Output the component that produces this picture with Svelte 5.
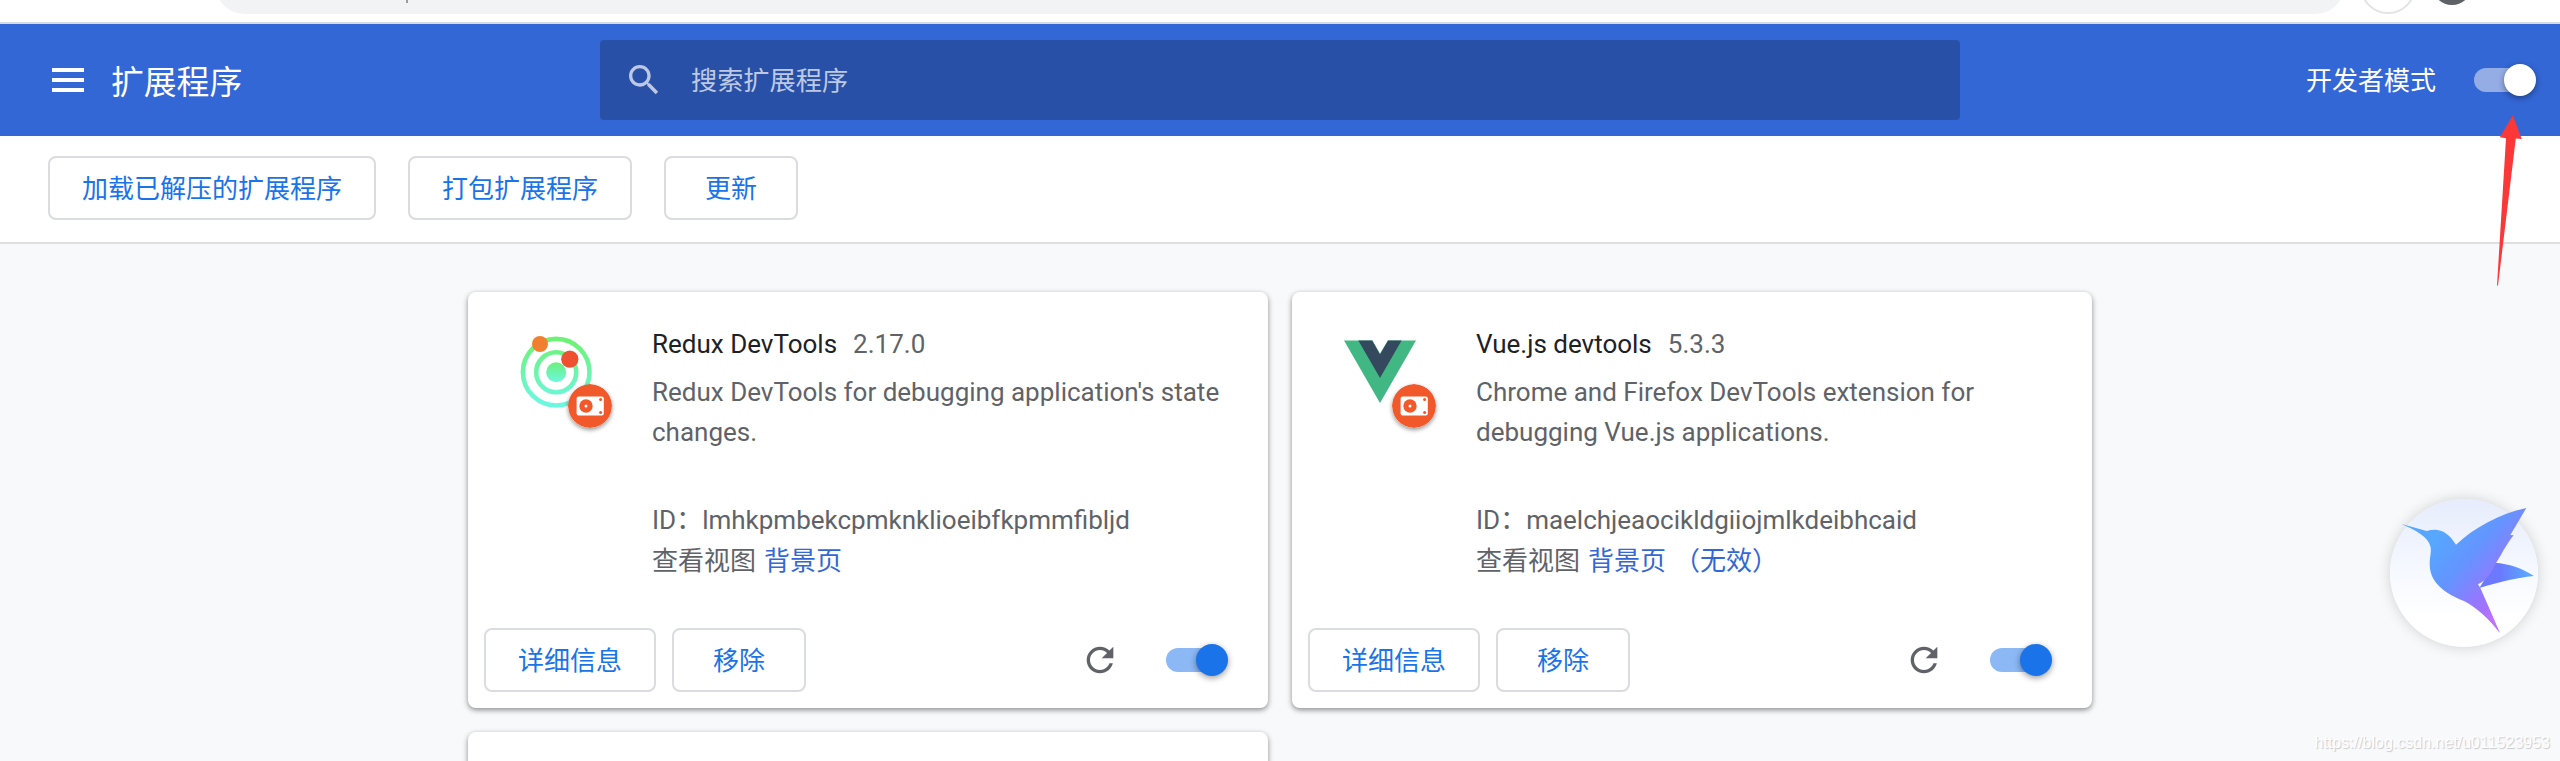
<script>
  const tools = ['加载已解压的扩展程序', '打包扩展程序', '更新'];
  const extensions = [
    {
      icon: 'redux',
      name: 'Redux DevTools',
      version: '2.17.0',
      description: "Redux DevTools for debugging application's state changes.",
      id: 'lmhkpmbekcpmknklioeibfkpmmfibljd',
      views: ['背景页']
    },
    {
      icon: 'vue',
      name: 'Vue.js devtools',
      version: '5.3.3',
      description: 'Chrome and Firefox DevTools extension for debugging Vue.js applications.',
      id: 'maelchjeaocikldgiiojmlkdeibhcaid',
      views: ['背景页', '（无效）']
    }
  ];
</script>

<div class="page">
  <div class="browser">
    <div class="omnibox"><i></i></div>
    <div class="ring"></div>
    <div class="avatar"></div>
  </div>

  <header>
    <div class="brand">
      <div class="menu"><i></i><i></i><i></i></div>
      <h1>扩展程序</h1>
    </div>
    <div class="search">
      <svg width="40" height="40" viewBox="0 0 24 24"><path fill="currentColor" d="M15.5 14h-.79l-.28-.27C15.41 12.59 16 11.11 16 9.5 16 5.91 13.09 3 9.5 3S3 5.91 3 9.5 5.91 16 9.5 16c1.61 0 3.09-.59 4.23-1.57l.27.28v.79l5 4.99L20.49 19l-4.99-5zm-6 0C7.01 14 5 11.99 5 9.5S7.01 5 9.5 5 14 7.01 14 9.5 11.99 14 9.5 14z"/></svg>
      <span>搜索扩展程序</span>
    </div>
    <div class="dev">
      <span>开发者模式</span>
      <div class="toggle light"><b></b></div>
    </div>
  </header>

  <nav>
    {#each tools as tool}
      <button>{tool}</button>
    {/each}
  </nav>

  <main>
    {#each extensions as ext}
      <article>
        <div class="body">
          <div class="icon">
            {#if ext.icon === 'redux'}
              <svg width="72" height="72" viewBox="0 0 72 72">
                <defs>
                  <linearGradient id="orbit" gradientUnits="userSpaceOnUse" x1="0" y1="0" x2="0" y2="72">
                    <stop offset="0.1" stop-color="#6cf377"/>
                    <stop offset="0.9" stop-color="#6cf7df"/>
                  </linearGradient>
                  <linearGradient id="core" x1="0" y1="0" x2="0" y2="1">
                    <stop offset="0" stop-color="#6cf07b"/>
                    <stop offset="1" stop-color="#6cf7df"/>
                  </linearGradient>
                </defs>
                <circle cx="36.2" cy="36.2" r="33.3" fill="none" stroke="url(#orbit)" stroke-width="4.6"/>
                <circle cx="36.2" cy="36.2" r="20" fill="none" stroke="url(#orbit)" stroke-width="4.6"/>
                <circle cx="36.2" cy="36.2" r="10" fill="url(#core)"/>
                <circle cx="20" cy="8" r="8" fill="#f08030"/>
                <circle cx="49.8" cy="23.2" r="8.6" fill="#ee5030"/>
              </svg>
            {:else}
              <svg width="72" height="72" viewBox="0 0 72 72">
                <path fill="#41b883" d="M0 4.5h28.5L36 17.5l8-13h28L36 67z"/>
                <path fill="#35495e" d="M14.3 4.5h13.8L36 18.5l8-14h13.6L36 42z"/>
              </svg>
            {/if}
            <svg class="badge" width="44" height="44" viewBox="0 0 44 44">
              <circle cx="22" cy="22" r="22" fill="#f2592a"/>
              <rect x="8.6" y="12.6" width="27.2" height="19" rx="2" fill="#fff"/>
              <circle cx="18" cy="22" r="6.7" fill="#f2592a"/>
              <circle cx="18" cy="22" r="1.5" fill="#fff"/>
              <circle cx="32.6" cy="15.6" r="1.5" fill="#f2592a"/>
              <circle cx="32.6" cy="28.6" r="1.5" fill="#f2592a"/>
            </svg>
          </div>
          <div class="info">
            <div class="name"><strong>{ext.name}</strong><span>{ext.version}</span></div>
            <p class="description">{ext.description}</p>
            <div class="id">ID：{ext.id}</div>
            <div class="views"><span>查看视图</span>{#each ext.views as view}<a>{view}</a>{/each}</div>
          </div>
        </div>
        <footer>
          <button>详细信息</button>
          <button>移除</button>
          <svg class="reload" width="40" height="40" viewBox="0 0 24 24"><path fill="#5f6368" d="M17.65 6.35C16.2 4.9 14.21 4 12 4c-4.42 0-7.99 3.58-7.99 8s3.57 8 7.99 8c3.73 0 6.84-2.55 7.73-6h-2.08c-.82 2.33-3.04 4-5.65 4-3.31 0-6-2.69-6-6s2.69-6 6-6c1.66 0 3.14.69 4.22 1.78L13 11h7V4l-2.35 2.35z"/></svg>
          <div class="toggle"><b></b></div>
        </footer>
      </article>
    {/each}
    <article></article>
  </main>

  <svg class="arrow" width="32" height="176" viewBox="2494 112 32 176">
    <path fill="#fb3838" d="M2512.8 115.5L2521.8 139L2515.8 138.6L2498 285.5H2497L2506 138.2L2499.8 137.2Z"/>
  </svg>

  <div class="bird">
    <svg width="148" height="148" viewBox="270 117 444 444">
      <defs>
        <linearGradient id="wing" gradientUnits="userSpaceOnUse" x1="410" y1="240" x2="610" y2="420">
          <stop offset="0" stop-color="#57a6ff"/>
          <stop offset="0.4" stop-color="#6494ff"/>
          <stop offset="0.75" stop-color="#8f7bff"/>
          <stop offset="1" stop-color="#a472ff"/>
        </linearGradient>
        <radialGradient id="tailglow" gradientUnits="userSpaceOnUse" cx="580" cy="490" r="115">
          <stop offset="0" stop-color="#cb70ff"/>
          <stop offset="0.45" stop-color="#a472ff" stop-opacity="0.9"/>
          <stop offset="1" stop-color="#8f7bff" stop-opacity="0"/>
        </radialGradient>
        <linearGradient id="feather" gradientUnits="userSpaceOnUse" x1="540" y1="0" x2="702" y2="0">
          <stop offset="0.35" stop-color="#6b78ff"/>
          <stop offset="1" stop-color="#55b2ff"/>
        </linearGradient>
      </defs>
      <path fill="url(#feather)" d="M585 308C627 311 665 324 702 348C645 354 589 368 538 384Z"/>
      <path fill="url(#wing)" d="M305 192L380 213C416 202 443 214 468 254C523 203 597 162 679 144L631 225L641 226C617 255 606 282 588 309C573 339 562 360 534 373L541 384L599 518C567 476 533 444 492 423C429 398 388 365 389 309C390 288 394 279 392 262C384 228 347 212 305 192Z"/>
      <path fill="url(#tailglow)" d="M534 373L541 384L599 518C567 476 533 444 492 423C470 414 450 404 435 393Z"/>
    </svg>
  </div>

  <div class="watermark">https://blog.csdn.net/u011523953</div>
</div>

<style>
  :global(body) { margin: 0; }
  .page {
    position: relative;
    width: 2560px;
    height: 761px;
    overflow: hidden;
    box-sizing: border-box;
    background: #f8f9fb;
    font-family: Roboto, "Noto Sans CJK SC", sans-serif;
    font-size: 26px;
    line-height: 40px;
    color: #5f6368;
    display: flex;
    flex-direction: column;
  }
  .browser {
    flex: none;
    box-sizing: border-box;
    height: 24px;
    padding: 0 88px 8px 216px;
    border-bottom: 2px solid #d9dbe1;
    background: #fff;
    display: flex;
    overflow: hidden;
  }
  .omnibox {
    width: 2128px;
    height: 56px;
    margin-top: -42px;
    border-radius: 28px;
    background: #f1f3f4;
    display: flex;
    align-items: center;
  }
  .omnibox i { width: 2px; height: 3px; margin: 31px 0 0 190px; background: #999ca0; }
  .ring {
    box-sizing: border-box;
    width: 56px;
    height: 56px;
    margin: -42px 0 0 16px;
    border: 2px solid #e2e3e5;
    border-radius: 50%;
  }
  .avatar {
    width: 40px;
    height: 40px;
    margin: -35px 0 0 16px;
    border-radius: 50%;
    background: #5f6368;
  }
  header {
    flex: none;
    height: 112px;
    box-sizing: border-box;
    padding: 0 24px 0 52px;
    background: #3367d6;
    color: #fff;
    display: grid;
    grid-template-columns: 548px 1360px 1fr;
    align-items: center;
  }
  .brand { display: flex; align-items: center; gap: 27px; }
  .menu { display: grid; gap: 6px; width: 32px; }
  .menu i { height: 4px; background: #fff; }
  h1 { margin: 0; padding-top: 5px; font-size: 32.8px; font-weight: 400; }
  .search {
    box-sizing: border-box;
    height: 80px;
    padding-left: 24px;
    border-radius: 4px;
    background: #2850a7;
    color: #bdc9e4;
    display: flex;
    align-items: center;
    gap: 27px;
  }
  .search span { padding-top: 2px; font-size: 26.2px; }
  .dev { display: flex; justify-content: flex-end; align-items: center; gap: 38px; }
  .dev span { padding-top: 2px; }
  .toggle {
    width: 62px;
    height: 32px;
    display: flex;
    align-items: center;
    justify-content: flex-end;
  }
  .toggle::before {
    content: "";
    flex: none;
    width: 56px;
    height: 24px;
    border-radius: 12px;
    background: #8cb8f5;
  }
  .toggle b {
    flex: none;
    width: 32px;
    height: 32px;
    margin-left: -26px;
    border-radius: 50%;
    background: #1a73e8;
    box-shadow: 0 2px 6px rgba(0, 0, 0, 0.4);
  }
  .light::before { background: #95ade5; }
  .light b { background: #fff; }
  nav {
    flex: none;
    height: 108px;
    box-sizing: border-box;
    padding: 20px 48px;
    border-bottom: 2px solid #dfdfe0;
    background: #fff;
    display: flex;
    gap: 32px;
  }
  button {
    box-sizing: border-box;
    height: 64px;
    min-width: 134px;
    padding: 1px 32px 0;
    border: 2px solid #dadce0;
    border-radius: 8px;
    background: #fff;
    color: #1a73e8;
    font: inherit;
    white-space: nowrap;
  }
  main {
    flex: none;
    padding: 48px 468px 0;
    display: grid;
    grid-template-columns: 800px 800px;
    grid-auto-rows: 416px;
    gap: 24px;
  }
  article {
    box-sizing: border-box;
    padding: 32px 16px 16px;
    border-radius: 8px;
    background: #fff;
    box-shadow: 0 2px 4px rgba(60, 64, 67, 0.3), 0 2px 6px rgba(0, 0, 0, 0.25);
    display: flex;
    flex-direction: column;
    justify-content: space-between;
  }
  .body { display: flex; padding: 0 24px 0 36px; }
  .icon { position: relative; width: 72px; height: 72px; margin: 12px 60px 0 0; flex: none; }
  .icon svg { display: block; }
  .icon .badge {
    position: absolute;
    left: 48px;
    top: 48px;
    border-radius: 50%;
    box-shadow: 0 2px 4px rgba(0, 0, 0, 0.4);
  }
  .info { width: 592px; }
  .name { display: flex; gap: 16px; }
  .name strong { font-weight: 400; color: #202124; }
  .description { height: 80px; margin: 8px 0 48px; }
  .views { display: flex; gap: 8px; padding-top: 1px; }
  .views a { color: #3367d6; }
  footer { display: flex; align-items: center; gap: 16px; }
  .reload { margin-left: auto; }
  footer .toggle { margin: 0 24px 0 30px; }
  .arrow { position: absolute; left: 2494px; top: 112px; }
  .bird {
    position: absolute;
    left: 2390px;
    top: 499px;
    width: 148px;
    height: 148px;
    border-radius: 50%;
    background: linear-gradient(#e6ecfc, #f6f9ff 50%, #fff 80%);
    box-shadow: 0 0 14px rgba(0, 0, 0, 0.17);
  }
  .bird svg { display: block; }
  .watermark {
    position: absolute;
    right: 10px;
    bottom: 8px;
    font: 16px/20px "Liberation Sans", sans-serif;
    color: #fff;
    text-shadow: 1px 1px 1px #c6c7ca;
  }
</style>
